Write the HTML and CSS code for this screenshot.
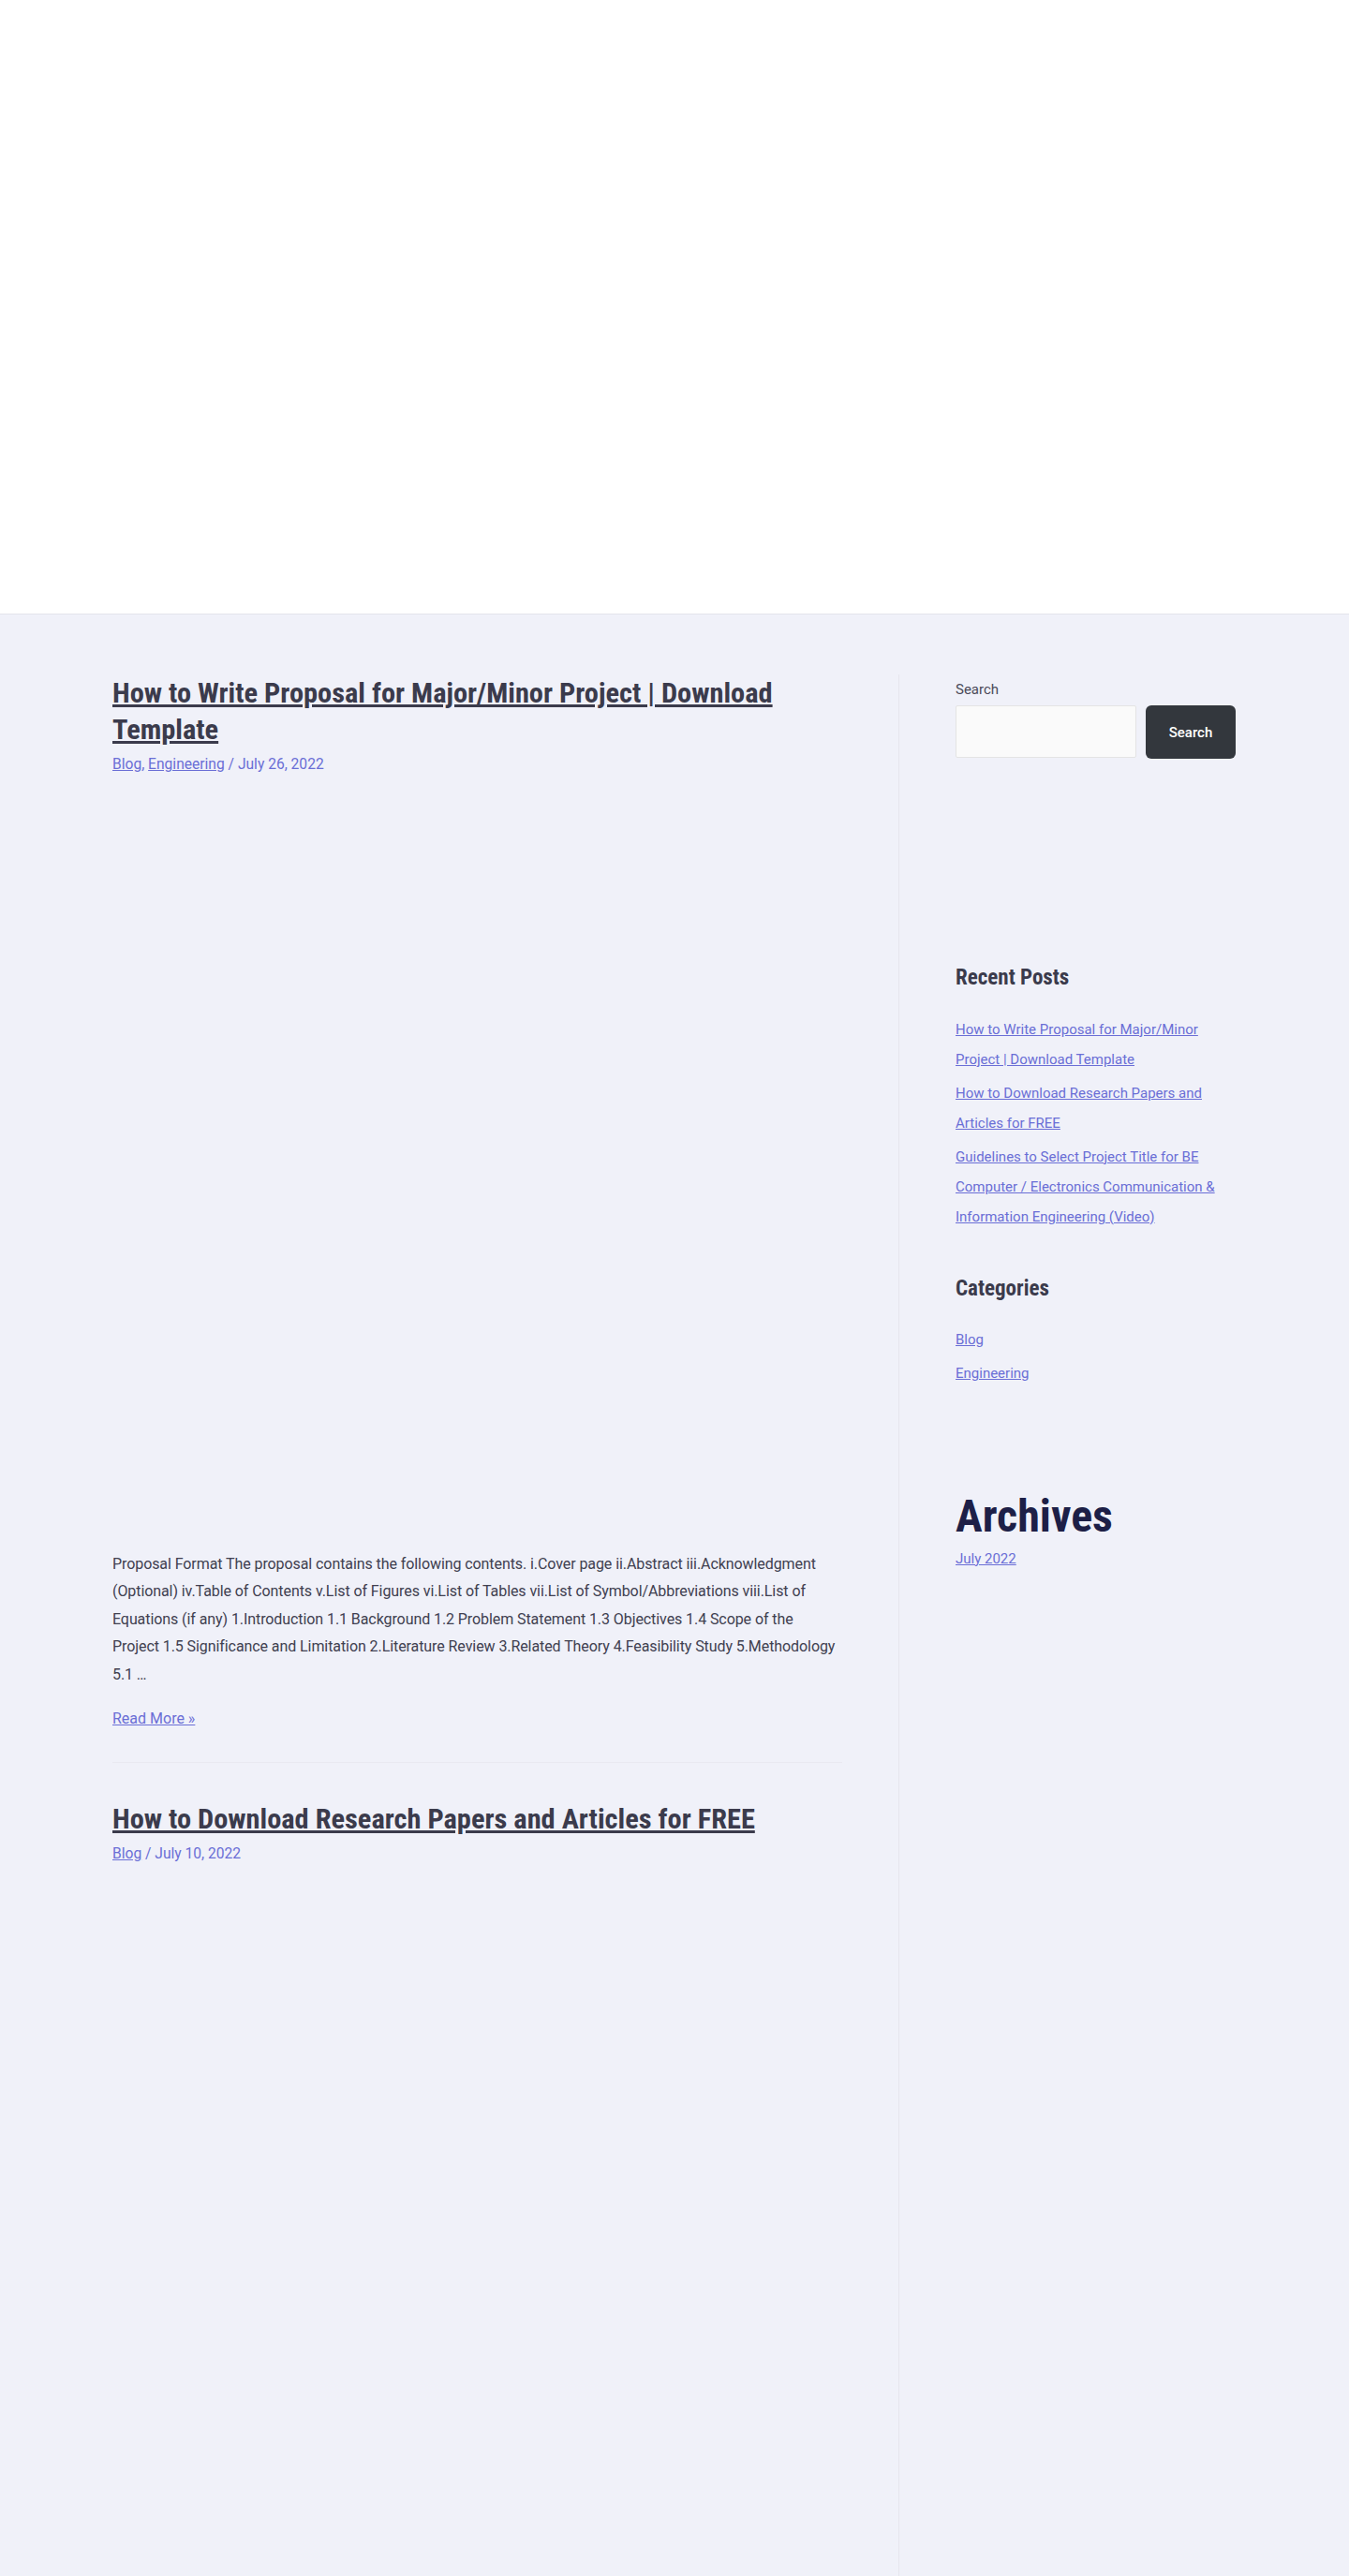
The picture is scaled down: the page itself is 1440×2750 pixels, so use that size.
FILE: index.html
```html
<!DOCTYPE html>
<html lang="en">
<head>
<meta charset="utf-8">
<title>Blog</title>
<link rel="stylesheet" href="styles.css">
</head>
<body>
<header class="site-header"></header>
<div class="site-content">
  <div class="container">
    <main class="primary">
      <article class="post">
        <h2 class="entry-title"><a href="#">How to Write Proposal for Major/Minor Project | Download Template</a></h2>
        <div class="entry-meta"><a href="#">Blog</a>, <a href="#">Engineering</a> / July 26, 2022</div>
        <div class="entry-thumb"></div>
        <p class="excerpt">Proposal Format The proposal contains the following contents. i.Cover page ii.Abstract iii.Acknowledgment (Optional) iv.Table of Contents v.List of Figures vi.List of Tables vii.List of Symbol/Abbreviations viii.List of Equations (if any) 1.Introduction 1.1 Background 1.2 Problem Statement 1.3 Objectives 1.4 Scope of the Project 1.5 Significance and Limitation 2.Literature Review 3.Related Theory 4.Feasibility Study 5.Methodology 5.1 …</p>
        <p class="read-more"><a href="#">Read More »</a></p>
      </article>
      <article class="post post-second">
        <h2 class="entry-title"><a href="#">How to Download Research Papers and Articles for FREE</a></h2>
        <div class="entry-meta"><a href="#">Blog</a> / July 10, 2022</div>
      </article>
    </main>
    <aside class="sidebar">
      <section class="widget widget-search">
        <label class="search-label" for="s">Search</label>
        <div class="search-row">
          <input class="search-input" id="s" type="search">
          <button class="search-button" type="button">Search</button>
        </div>
      </section>
      <section class="widget widget-recent">
        <h2 class="widget-title">Recent Posts</h2>
        <ul class="widget-list">
          <li><a href="#">How to Write Proposal for Major/Minor Project | Download Template</a></li>
          <li><a href="#">How to Download Research Papers and Articles for FREE</a></li>
          <li><a href="#">Guidelines to Select Project Title for BE Computer / Electronics Communication &amp; Information Engineering (Video)</a></li>
        </ul>
      </section>
      <section class="widget widget-categories">
        <h2 class="widget-title">Categories</h2>
        <ul class="widget-list">
          <li><a href="#">Blog</a></li>
          <li><a href="#">Engineering</a></li>
        </ul>
      </section>
      <section class="widget widget-archives">
        <h2 class="archives-title">Archives</h2>
        <ul class="archive-list">
          <li><a href="#">July 2022</a></li>
        </ul>
      </section>
    </aside>
  </div>
</div>
</body>
</html>
```
FILE: styles.css
```css
* { box-sizing: border-box; }
html, body { margin: 0; padding: 0; }
body {
  font-family: Roboto, "Liberation Sans", sans-serif;
  font-size: 16px;
  line-height: 1.85;
  color: #404050;
  background: #f0f1f9;
  min-height: 2750px;
}
a { color: #6a6ed6; text-decoration: underline; }

.site-header {
  height: 656px;
  background: #ffffff;
  border-bottom: 1px solid #e4e4ec;
}

.site-content { padding-top: 64px; }
.container {
  width: 1200px;
  margin: 0 auto;
  display: flex;
  align-items: stretch;
  min-height: 2030px;
}
.primary {
  width: 840px;
  padding-right: 60px;
  border-right: 1px solid #e6e6ee;
}
.sidebar {
  width: 360px;
  padding-left: 60px;
  font-size: 15px;
}

.entry-title {
  margin: 0;
  font-family: "Roboto Condensed", Roboto, sans-serif;
  font-stretch: condensed;
  font-weight: 700;
  font-size: 30.4px;
  line-height: 39px;
}
.entry-title a { color: #3b3b4c; }
.entry-meta {
  margin-top: 4px;
  font-size: 15.6px;
  line-height: 29.6px;
  color: #6a6ed6;
}
.entry-thumb { height: 823px; }
.excerpt { margin: 0; letter-spacing: -0.08px; }
.read-more { margin: 17px 0 0; }
.post { padding-bottom: 32px; border-bottom: 1px solid #e9e9f1; }
.post-second { border-bottom: 0; padding-top: 40px; }

.search-label { display: block; line-height: 33px; color: #4a4a58; }
.search-row { display: flex; gap: 10px; }
.search-input {
  width: 193px;
  height: 56px;
  background: #fafafa;
  border: 1px solid #e4e4e4;
  border-radius: 2px;
}
.search-button {
  width: 96px;
  height: 57px;
  background: #33373d;
  color: #fff;
  border: 0;
  border-radius: 6px;
  font-family: Roboto, sans-serif;
  font-size: 15px;
  font-weight: 500;
}

.widget-recent { margin-top: 220px; }
.widget-title {
  margin: 0;
  font-family: "Roboto Condensed", Roboto, sans-serif;
  font-stretch: condensed;
  font-weight: 700;
  font-size: 23px;
  line-height: 1.2;
  color: #3b3b4c;
}
.widget-list { list-style: none; margin: 25px 0 0; padding: 0; line-height: 32px; }
.widget-list li + li { margin-top: 4px; }
.widget-categories { margin-top: 47px; }
.widget-archives { margin-top: 108px; }
.archives-title {
  margin: 0;
  font-family: "Roboto Condensed", Roboto, sans-serif;
  font-stretch: condensed;
  font-weight: 700;
  font-size: 48px;
  line-height: 1.2;
  color: #1d1f47;
}
.archive-list { list-style: none; margin: 0; padding: 0; line-height: 32px; }
```
